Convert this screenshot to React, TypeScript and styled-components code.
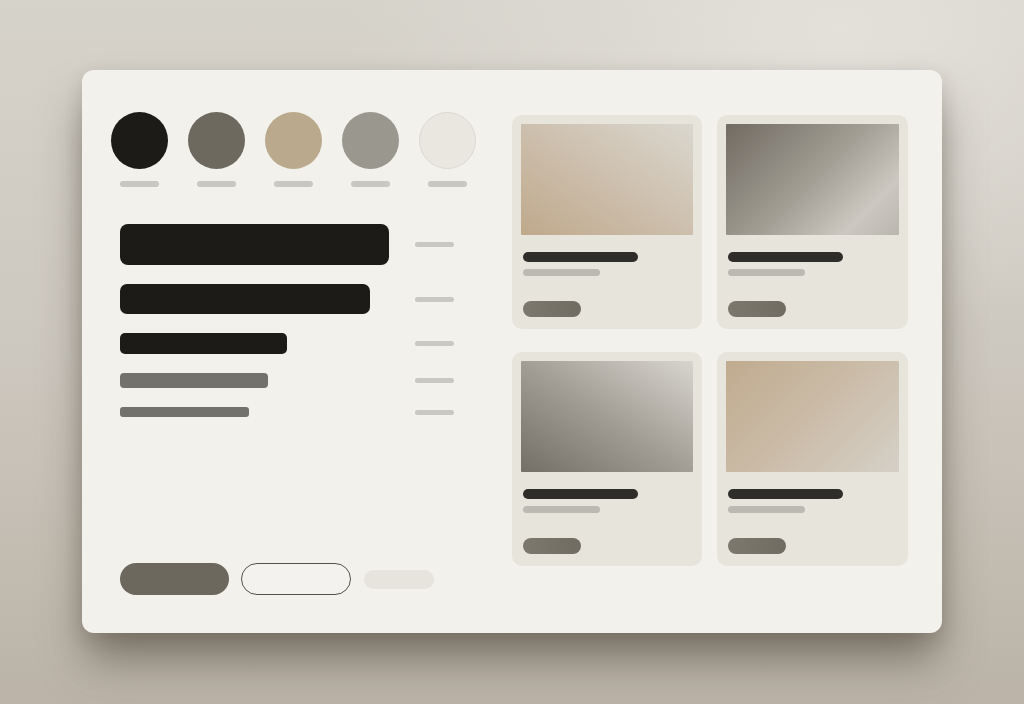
import React from "react";
import styled, { createGlobalStyle } from "styled-components";

const GlobalStyle = createGlobalStyle`
  html, body {
    margin: 0;
    padding: 0;
    height: 100%;
  }
  body {
    font-family: "Inter", "Liberation Sans", sans-serif;
    overflow: hidden;
  }
`;

const swatches = ["#1c1b18", "#6e695f", "#baa98c", "#9a978f", "#e9e7e0"];

const bars = [
  { width: 269, height: 41, radius: 8, color: "#1c1b18" },
  { width: 250, height: 30, radius: 7, color: "#1c1b18" },
  { width: 167, height: 21, radius: 5, color: "#1c1b18" },
  { width: 148, height: 15, radius: 4, color: "#73716c" },
  { width: 129, height: 10, radius: 3, color: "#73716c" },
];

const cards = [
  "linear-gradient(to top right, #bfa98c 0%, #cdbfad 50%, #dad7ce 100%)",
  "linear-gradient(135deg, #716b62 0%, #a29e94 50%, #ccc8c1 80%, #b9b6ae 100%)",
  "linear-gradient(to top right, #746f66 0%, #a29e95 50%, #d8d5cf 100%)",
  "linear-gradient(135deg, #c0ab8f 0%, #cbbca8 50%, #d5d0c7 100%)",
];

const App: React.FC = () => {
  return (
    <>
      <GlobalStyle />
      <Page>
        <Panel>
          <LeftColumn>
            <SwatchRow>
              {swatches.map((c, i) => (
                <Swatch key={c}>
                  <Circle $color={c} $outlined={i === swatches.length - 1} />
                  <Label />
                </Swatch>
              ))}
            </SwatchRow>

            <BarList>
              {bars.map((b, i) => (
                <BarRow key={i}>
                  <Bar
                    $color={b.color}
                    $radius={b.radius}
                    style={{ width: b.width, height: b.height }}
                  />
                  <Tick />
                </BarRow>
              ))}
            </BarList>

            <ButtonRow>
              <PrimaryButton />
              <OutlineButton />
              <GhostButton />
            </ButtonRow>
          </LeftColumn>

          <CardGrid>
            {cards.map((bg, i) => (
              <Card key={i}>
                <CardImage $bg={bg} />
                <CardTitle />
                <CardSub />
                <CardButton />
              </Card>
            ))}
          </CardGrid>
        </Panel>
      </Page>
    </>
  );
};

const Page = styled.div`
  width: 1024px;
  height: 704px;
  box-sizing: border-box;
  padding: 70px 0 0 82px;
  background: radial-gradient(
      ellipse 60% 55% at 82% 4%,
      rgba(228, 225, 219, 1) 0%,
      rgba(222, 219, 212, 0.6) 45%,
      rgba(222, 219, 212, 0) 80%
    ),
    linear-gradient(to bottom, #d6d3cb 0%, #cdc8bf 50%, #bbb3a7 100%);
`;

const Panel = styled.div`
  width: 860px;
  height: 563px;
  box-sizing: border-box;
  padding: 42px 34px 38px 30px;
  background: #f2f1ec;
  border-radius: 12px;
  display: flex;
  justify-content: space-between;
  box-shadow: 0 30px 44px -4px rgba(70, 62, 50, 0.55),
    0 6px 18px rgba(60, 52, 42, 0.14);
`;

const LeftColumn = styled.div`
  display: flex;
  flex-direction: column;
  width: 364px;
`;

const SwatchRow = styled.div`
  display: flex;
  gap: 20px;
  margin-left: -1px;
`;

const Swatch = styled.div`
  display: flex;
  flex-direction: column;
  align-items: center;
  gap: 12px;
`;

const Circle = styled.div<{ $color: string; $outlined?: boolean }>`
  width: 57px;
  height: 57px;
  border-radius: 50%;
  box-sizing: border-box;
  background: ${({ $color }) => $color};
  border: ${({ $outlined }) => ($outlined ? "1px solid #dcd9d1" : "none")};
`;

const Label = styled.div`
  width: 39px;
  height: 6px;
  border-radius: 3px;
  background: #c9c7c1;
`;

const BarList = styled.div`
  display: flex;
  flex-direction: column;
  gap: 19px;
  margin: 37px 0 0 8px;
`;

const BarRow = styled.div`
  display: grid;
  grid-template-columns: 295px 39px;
  align-items: center;
`;

const Bar = styled.div<{ $color: string; $radius: number }>`
  background: ${({ $color }) => $color};
  border-radius: ${({ $radius }) => $radius}px;
`;

const Tick = styled.div`
  height: 5px;
  border-radius: 3px;
  background: #cac8c2;
`;

const ButtonRow = styled.div`
  display: flex;
  align-items: center;
  gap: 12px;
  margin: auto 0 0 8px;
`;

const PrimaryButton = styled.div`
  width: 109px;
  height: 32px;
  border-radius: 16px;
  background: #6d685e;
`;

const OutlineButton = styled.div`
  width: 110px;
  height: 32px;
  box-sizing: border-box;
  border-radius: 16px;
  border: 1px solid #55524c;
  background: #f3f2ee;
`;

const GhostButton = styled.div`
  width: 70px;
  height: 19px;
  margin-left: 1px;
  border-radius: 10px;
  background: #e6e4dd;
`;

const CardGrid = styled.div`
  display: grid;
  grid-template-columns: 190px 191px;
  grid-auto-rows: 214px;
  column-gap: 15px;
  row-gap: 23px;
  margin-top: 3px;
  align-content: start;
`;

const Card = styled.div`
  display: flex;
  flex-direction: column;
  align-items: flex-start;
  box-sizing: border-box;
  padding: 9px 9px 12px;
  border-radius: 10px;
  background: #e7e4dc;
`;

const CardImage = styled.div<{ $bg: string }>`
  align-self: stretch;
  height: 111px;
  border-radius: 1px;
  background: ${({ $bg }) => $bg};
`;

const CardTitle = styled.div`
  width: 115px;
  height: 10px;
  margin: 17px 0 0 2px;
  border-radius: 5px;
  background: #2f2d29;
`;

const CardSub = styled.div`
  width: 77px;
  height: 7px;
  margin: 7px 0 0 2px;
  border-radius: 4px;
  background: #bcb9b2;
`;

const CardButton = styled.div`
  width: 58px;
  height: 16px;
  margin: 25px 0 0 2px;
  border-radius: 8px;
  background: linear-gradient(to right, #7d786d, #716c62);
`;

export default App;
